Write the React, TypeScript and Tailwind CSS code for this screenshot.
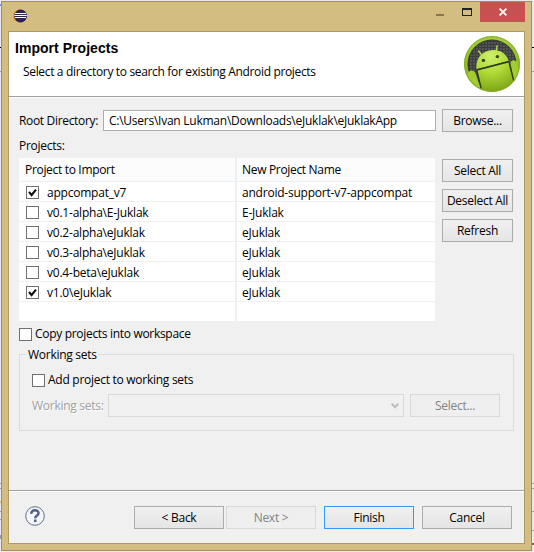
import React from "react";

const rows = [
  { name: "appcompat_v7", out: "android-support-v7-appcompat", on: true },
  { name: "v0.1-alpha\\E-Juklak", out: "E-Juklak", on: false },
  { name: "v0.2-alpha\\eJuklak", out: "eJuklak", on: false },
  { name: "v0.3-alpha\\eJuklak", out: "eJuklak", on: false },
  { name: "v0.4-beta\\eJuklak", out: "eJuklak", on: false },
  { name: "v1.0\\eJuklak", out: "eJuklak", on: true },
];

function Check({ on = false }: { on?: boolean }) {
  return (
    <span className="block h-[13px] w-[13px] shrink-0 border border-[#707070] bg-white">
      {on && (
        <svg viewBox="0 0 11 11" className="block h-[11px] w-[11px]">
          <path d="M2 5 L4.6 8 L9 2.6" fill="none" stroke="#111" strokeWidth="2.1" />
        </svg>
      )}
    </span>
  );
}

function Button({ children, className = "w-[71px]", kind = "normal" }: { children: React.ReactNode; className?: string; kind?: "normal" | "disabled" | "default" }) {
  const look = {
    normal: "border-[#acacac] bg-linear-to-b from-[#f0f0f0] to-[#e5e5e5]",
    disabled: "border-[#d9d9d9] bg-[#efefef] text-[#838383]",
    default: "border-[#3399ff] bg-linear-to-b from-[#f0f0f0] to-[#e5e5e5]",
  }[kind];
  return (
    <button className={`flex h-[23px] shrink-0 items-center justify-center border whitespace-nowrap ${look} ${className}`}>
      {children}
    </button>
  );
}

function EclipseIcon() {
  return (
    <svg viewBox="0 0 14 14" className="h-[14px] w-[14px]">
      <circle cx="6.4" cy="7" r="6.4" fill="#f7941e" />
      <circle cx="7.6" cy="7" r="6.4" fill="#2c2255" />
      <path d="M2 4.500h11M1.200 6.500h12.600M2 8.500h11" stroke="#fff" strokeWidth="1" />
    </svg>
  );
}

function AndroidIcon() {
  return (
    <svg viewBox="0 0 56 56" className="h-14 w-14">
      <defs>
        <linearGradient id="ring" x1="0" y1="0" x2="0" y2="1">
          <stop offset="0" stopColor="#a6cf3a" />
          <stop offset="0.6" stopColor="#8dbb22" />
          <stop offset="1" stopColor="#7a9f16" />
        </linearGradient>
        <radialGradient id="body" gradientUnits="userSpaceOnUse" cx="27" cy="20" r="36">
          <stop offset="0" stopColor="#cdf06a" />
          <stop offset="0.45" stopColor="#b2dc37" />
          <stop offset="1" stopColor="#7da516" />
        </radialGradient>
        <pattern id="mesh" width="3" height="3" patternUnits="userSpaceOnUse">
          <rect width="3" height="3" fill="#3c3d3e" />
          <rect width="2" height="2" fill="#535556" />
        </pattern>
        <clipPath id="disc">
          <circle cx="28" cy="28" r="24.2" />
        </clipPath>
        <clipPath id="outer">
          <circle cx="28" cy="28" r="27.4" />
        </clipPath>
      </defs>
      <circle cx="28" cy="28" r="28" fill="url(#ring)" />
      <circle cx="28" cy="28" r="24.2" fill="url(#mesh)" />
      <circle cx="28" cy="28" r="24" fill="none" stroke="#2c3320" strokeWidth="0.800" />
      <path d="M14.600 15l2.800 3.600M33.100 9.800l-.8 5.500" stroke="#b9e04a" strokeWidth="1.400" strokeLinecap="round" />
      <path d="M12.500 33.200C11.300 24 16.500 16.400 25 14.500C34 12.500 42 16.500 44.600 24.800Z" fill="url(#body)" />
      <g clipPath="url(#outer)">
        <path d="M3.500 39c0-5 6.500-6 8-1.800L16.500 52L8 50Z" fill="#a2cc30" />
        <path d="M46.500 28c-.5-4.500 5.500-5 7-.5L55 38L50 45Z" fill="#a2cc30" />
        <path d="M13 34.800L45 26.600L50.500 45Q42 56 28 56Q21 56 17 53Z" fill="url(#body)" />
      </g>
      <path d="M12.700 33.900L45 25.500" stroke="#2a3a10" strokeWidth="1.100" />
      <path d="M13 35l4.200 17.300M45.200 27l4.600 18" stroke="#2a3a10" strokeWidth="1.300" />
      <circle cx="19.400" cy="24.400" r="1.700" fill="#36451a" />
      <circle cx="33.400" cy="20.600" r="1.700" fill="#36451a" />
      <circle cx="28" cy="28" r="27.400" fill="none" stroke="#82a928" strokeWidth="0.900" />
    </svg>
  );
}

export default function App() {
  return (
    <div className="flex h-[552px] w-[534px] overflow-hidden bg-[#e8eaf0] font-['Open_Sans','Noto_Sans',sans-serif] text-[12px] leading-4 tracking-[-0.27px] text-black">
      {/* Slivers of the editor window behind the dialog */}
      <div className="flex w-px shrink-0 flex-col">
        <div className="mt-[4px] h-[2px] bg-[#6f9fd8]" />
        <div className="mt-[41px] h-px bg-black" />
        <div className="mt-[23px] h-px bg-[#a0a0a0]" />
        <div className="mt-[411px] h-px bg-[#a0a0a0]" />
        <div className="mt-[4px] h-px bg-[#a0a0a0]" />
        <div className="mt-[12px] h-[2px] bg-[#e0bd62]" />
        <div className="mt-[8px] h-px bg-[#a0a0a0]" />
        <div className="mt-[7px] h-px bg-[#a0a0a0]" />
        <div className="mt-[15px] h-[4px] bg-[#9799a3]" />
      </div>
      <div className="mt-px flex h-[550px] w-[531px] shrink-0 flex-col border border-[#a48e57] bg-[#d3bd80] px-[6px] pb-[6px]">
        <header className="flex h-[29px] shrink-0 items-start">
          <div className="mt-[7px] ml-[5px]"><EclipseIcon /></div>
          <div className="ml-auto flex">
            <div className="mt-[12px] mr-[18px] h-[2px] w-[8px] bg-[#887650]" />
            <div className="mt-[6px] mr-[8px] h-[8px] w-[10px] border border-t-2 border-[#222]" />
            <div className="flex h-[20px] w-[45px] items-center justify-center bg-[#c75050]">
              <svg viewBox="0 0 8 8" className="h-[8px] w-[8px]"><path d="M.6.6l6.800 6.800M7.400.6L.6 7.400" stroke="#fff" strokeWidth="1.700" /></svg>
            </div>
          </div>
        </header>
        <main className="flex min-h-0 flex-1 flex-col border border-[#b09a63] bg-[#f0f0f0]">
          <section className="flex h-[65px] shrink-0 justify-between border-b border-[#a0a0a0] bg-white pr-[4px] pl-[6px]">
            <div>
              <h1 className="mt-[8px] font-['Liberation_Sans',Arial,sans-serif] text-[14px] leading-4 font-bold tracking-[0.04px]">Import Projects</h1>
              <p className="mt-[8px] ml-[8px] tracking-[-0.34px]">Select a directory to search for existing Android projects</p>
            </div>
            <div className="mt-[4px]"><AndroidIcon /></div>
          </section>
          <div className="flex flex-1 flex-col border-t border-white pl-[10px]">
            <div className="mt-[11px] flex h-[23px] items-center">
              <label className="w-[84px] tracking-[-0.33px] whitespace-nowrap">Root Directory:</label>
              <div className="mr-[6px] flex h-[21px] w-[333px] items-center border border-[#abadb3] bg-white pl-[5px] tracking-[-0.25px]">C:\Users\Ivan Lukman\Downloads\eJuklak\eJuklakApp</div>
              <Button>Browse...</Button>
            </div>
            <p className="mt-[6px] h-[20px]">Projects:</p>
            <div className="flex">
              <div className="mr-[7px] h-[163px] w-[416px] bg-white">
                <div className="flex h-[24px] border-b border-[#ebf0f5] bg-[#fcfcfc] tracking-[-0.32px]">
                  <div className="flex w-[218px] items-center border-r-2 border-[#ebf0f7] pl-[6px]">Project to Import</div>
                  <div className="flex items-center pl-[5px]">New Project Name</div>
                </div>
                {rows.map((r) => (
                  <div key={r.name} className="flex h-[20px] border-b border-[#f0f0f0] tracking-[-0.22px]">
                    <div className="flex w-[218px] items-center gap-[8px] border-r-2 border-[#ebf0f7] pt-[2px] pl-[7px]">
                      <Check on={r.on} />
                      {r.name}
                    </div>
                    <div className="flex items-center pt-[2px] pl-[5px]">{r.out}</div>
                  </div>
                ))}
                <div className="h-[19px] w-[218px] border-r-2 border-[#ebf0f7]" />
              </div>
              <div className="mt-px flex flex-col gap-[7px]">
                <Button>Select All</Button>
                <Button>Deselect All</Button>
                <Button>Refresh</Button>
              </div>
            </div>
            <div className="mt-[5px] flex items-center gap-[3px]">
              <Check />
              <span className="tracking-[-0.31px]">Copy projects into workspace</span>
            </div>
            <section className="mt-[12px] h-[77px] w-[495px] border border-[#dcdcdc] pl-[12px]">
              <h2 className="-mt-[8px] ml-[-6px] w-[72px] bg-[#f0f0f0] pl-[2px] whitespace-nowrap">Working sets</h2>
              <div className="mt-[9px] flex items-center gap-[3px]">
                <Check />
                <span>Add project to working sets</span>
              </div>
              <div className="mt-[6px] flex items-center">
                <span className="w-[76px] text-[#a0a0a0] [text-shadow:1px_1px_0_white]">Working sets:</span>
                <div className="mr-[6px] flex h-[23px] w-[296px] items-center justify-end border border-[#d9d9d9] pr-[4px]">
                  <svg viewBox="0 0 8 6" className="h-[6px] w-[8px]"><path d="M.7.8L4 4.200L7.300.8" fill="none" stroke="#bcbcbc" strokeWidth="2" /></svg>
                </div>
                <Button kind="disabled" className="w-[90px]">Select...</Button>
              </div>
            </section>
          </div>
          <footer className="flex h-[53px] shrink-0 items-start border-t border-[#a0a0a0]">
            <div className="flex h-full w-full border-t border-white pt-[14px] pl-[16px]">
              <svg viewBox="0 0 20 20" className="mr-[89px] h-[20px] w-[20px]">
                <circle cx="10" cy="10" r="9.300" fill="#f3f5f8" stroke="#61718c" strokeWidth="1" />
                <path d="M6.300 7.800C6 3.300 13.700 3.100 13.600 7.200C13.500 9.600 10.200 9.300 10.200 12.300" fill="none" stroke="#4b6186" strokeWidth="2.400" />
                <rect x="9" y="13.500" width="2.500" height="2.500" fill="#4b6186" />
              </svg>
              <Button className="mr-[2px] w-[90px]">&lt; Back</Button>
              <Button kind="disabled" className="mr-[8px] w-[90px]">Next &gt;</Button>
              <Button kind="default" className="mr-[8px] w-[90px]">Finish</Button>
              <Button className="w-[90px]">Cancel</Button>
            </div>
          </footer>
        </main>
      </div>
      <div className="flex w-[2px] shrink-0 flex-col">
        <div className="mt-[47px] h-px bg-black" />
        <div className="mt-[23px] h-px bg-[#a0a0a0]" />
        <div className="mt-[411px] h-px bg-[#a0a0a0]" />
        <div className="mt-[4px] h-px bg-[#a0a0a0]" />
        <div className="mt-[22px] h-px bg-[#a0a0a0]" />
        <div className="mt-[18px] h-px bg-[#a0a0a0]" />
        <div className="mt-[12px] h-[2px] bg-[#7d6440]" />
      </div>
    </div>
  );
}
